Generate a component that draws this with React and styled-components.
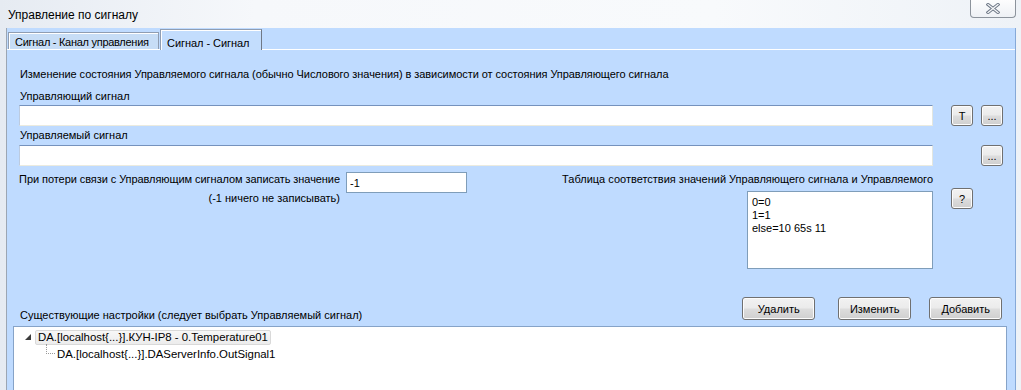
import styled, { createGlobalStyle } from 'styled-components';

const GlobalStyle = createGlobalStyle`
  html, body {
    margin: 0;
    padding: 0;
  }
  body {
    background: #f2f5f9;
    font-family: "Liberation Sans", Arial, sans-serif;
    font-size: 11px;
    color: #000;
  }
`;

const Window = styled.div`
  width: 1021px;
  height: 390px;
  overflow: hidden;
  display: flex;
  flex-direction: column;
  background: linear-gradient(90deg, #e6ebf2 0%, #f6f8fb 25%, #f8fafc 70%, #eef2f7 100%);
`;

const TitleBar = styled.div`
  height: 28px;
  flex: none;
  display: flex;
  align-items: flex-start;
`;

const Title = styled.div`
  padding: 8px 0 0 8px;
  font-size: 12px;
  line-height: 15px;
`;

const CloseButton = styled.div`
  margin-left: auto;
  margin-right: 5px;
  width: 44px;
  height: 17px;
  border: 1px solid #8c939c;
  border-top: none;
  border-radius: 0 0 4px 4px;
  background: linear-gradient(#fdfdfe, #eef1f5);
  display: flex;
  align-items: center;
  justify-content: center;
`;

const TabControl = styled.div`
  flex: 1;
  margin: 0 5px 0 6px;
  display: flex;
  flex-direction: column;
  background: #bfdbff;
  border-left: 1px solid #9ca6b3;
  border-right: 1px solid #86a9d8;
  min-height: 0;
`;

const TabStrip = styled.div`
  height: 21px;
  flex: none;
  display: flex;
  align-items: flex-end;
  padding-left: 1px;
  position: relative;
  z-index: 1;
`;

const Tab = styled.div`
  width: ${p => p.$width}px;
  height: ${p => (p.$active ? 21 : 17)}px;
  margin-bottom: ${p => (p.$active ? -1 : 0)}px;
  margin-left: ${p => (p.$active ? 1 : 0)}px;
  padding: ${p => (p.$active ? 6 : 2)}px 0 0 6px;
  display: flex;
  align-items: flex-start;
  box-sizing: border-box;
  border: 1px solid #8f9db2;
  border-bottom: none;
  border-right-color: ${p => (p.$active ? '#6f7886' : '#8f9db2')};
  background: ${p => (p.$active ? '#c3ddfd' : '#c7ddf6')};
  box-shadow: inset 1px 1px 0 #fff;
  line-height: 14px;
  letter-spacing: ${p => (p.$active ? -0.05 : -0.28)}px;
  white-space: nowrap;
  overflow: hidden;
`;

const Panel = styled.div`
  flex: 1;
  display: flex;
  flex-direction: column;
  border-top: 1px solid #ffffff;
  padding-left: 12px;
  min-height: 0;
`;

const Text = styled.div`
  line-height: 14px;
  white-space: nowrap;
  margin-top: ${p => p.$top || 0}px;
  padding-left: ${p => p.$indent || 0}px;
  letter-spacing: ${p => p.$tight || 0}px;
`;

const FormGrid = styled.div`
  display: grid;
  grid-template-columns: 914px 40px 30px;
  justify-items: end;
  margin-top: ${p => p.$top || 0}px;
`;

const TextBox = styled.input`
  box-sizing: border-box;
  width: ${p => p.$width}px;
  height: 21px;
  margin: 0 0 0 ${p => p.$left || 0}px;
  padding: 1px 3px;
  font: 11px "Liberation Sans", Arial, sans-serif;
  color: #000;
  background: #fff;
  border: 1px solid;
  border-color: ${p => (p.$plain ? '#7f9db9' : '#7592bd #e3e6e0 #ecebdf #bccbe0')};
  outline: none;
  justify-self: start;
`;

const SmallButton = styled.div`
  box-sizing: border-box;
  width: 22px;
  height: 21px;
  border: 1px solid #707070;
  border-radius: 3px;
  background: linear-gradient(#f2f2f2 0%, #ebebeb 48%, #dddddd 52%, #cfcfcf 100%);
  box-shadow: inset 0 0 0 1px #fcfcfc;
  display: flex;
  align-items: center;
  justify-content: center;
  font-size: 11px;
  line-height: 12px;
  grid-column: ${p => p.$col};
  align-self: start;
  margin-top: ${p => p.$top || 0}px;
`;

const LossRow = styled.div`
  display: flex;
  width: 914px;
  justify-self: start;
`;

const LossLabels = styled.div`
  width: 321px;
  display: flex;
  flex-direction: column;
  align-items: flex-end;
`;

const MapBlock = styled.div`
  margin-left: auto;
  display: flex;
  flex-direction: column;
  align-items: flex-end;
`;

const MapBox = styled.div`
  box-sizing: border-box;
  width: 186px;
  height: 78px;
  margin-top: 5px;
  padding: 4px 4px;
  background: #fff;
  border: 1px solid #7f9db9;
  line-height: 13px;
  white-space: pre-line;
`;

const ActionRow = styled.div`
  display: flex;
  align-items: flex-end;
  width: 984px;
  margin-top: 28px;
`;

const ActionButton = styled.div`
  box-sizing: border-box;
  width: 73px;
  height: 23px;
  margin-left: ${p => p.$gap}px;
  border: 1px solid #707070;
  border-radius: 3px;
  background: linear-gradient(#f2f2f2 0%, #ebebeb 48%, #dddddd 52%, #cfcfcf 100%);
  box-shadow: inset 0 0 0 1px #fcfcfc;
  display: flex;
  align-items: center;
  justify-content: center;
  line-height: 14px;
`;

const Tree = styled.div`
  flex: 1;
  width: 994px;
  box-sizing: border-box;
  margin: 6px 0 0 -6px;
  padding-top: 3px;
  background: #fff;
  border: 1px solid #86a3c8;
  border-bottom: none;
  font-size: 11.4px;
`;

const TreeRow = styled.div`
  display: flex;
  align-items: ${p => (p.$child ? 'flex-start' : 'center')};
  height: ${p => (p.$child ? 15 : 14)}px;
  margin-top: ${p => (p.$child ? 3 : 0)}px;
  padding-left: ${p => (p.$child ? 32 : 11)}px;
`;

const Expander = styled.svg`
  width: 6px;
  height: 6px;
  flex: none;
`;

const NodeBox = styled.div`
  margin-left: 4px;
  height: 15px;
  padding: 0 2px;
  display: flex;
  align-items: center;
  border: 1px solid #d9d9d9;
  border-radius: 2px;
  background: linear-gradient(#f7f7f7, #ececec);
  white-space: nowrap;
  box-sizing: border-box;
`;

const Connector = styled.span`
  width: 8px;
  height: 9px;
  margin-top: -3px;
  border-left: 1px dotted #9a9a9a;
  border-bottom: 1px dotted #9a9a9a;
  flex: none;
`;

const NodeText = styled.span`
  margin-left: 2px;
  line-height: 14px;
  white-space: nowrap;
`;

function CloseGlyph() {
  return (
    <svg width="14" height="11" viewBox="0 0 14 11">
      <path d="M2 1.5 L12 9.5 M12 1.5 L2 9.5" stroke="#6c7685" strokeWidth="3.2" strokeLinecap="square" fill="none" />
      <path d="M2 1.5 L12 9.5 M12 1.5 L2 9.5" stroke="#f6f7f9" strokeWidth="1.3" strokeLinecap="square" fill="none" />
    </svg>
  );
}

export default function App() {
  return (
    <>
      <GlobalStyle />
      <Window>
        <TitleBar>
          <Title>Управление по сигналу</Title>
          <CloseButton>
            <CloseGlyph />
          </CloseButton>
        </TitleBar>

        <TabControl>
          <TabStrip>
            <Tab $width={151}>Сигнал - Канал управления</Tab>
            <Tab $width={102} $active>Сигнал - Сигнал</Tab>
          </TabStrip>

          <Panel>
            <Text $top={17} $indent={1} $tight={-0.06}>
              Изменение состояния Управляемого сигнала (обычно Числового значения) в зависимости от состояния Управляющего сигнала
            </Text>

            <Text $top={8} $indent={1}>Управляющий сигнал</Text>
            <FormGrid $top={2}>
              <TextBox $width={914} readOnly />
              <SmallButton $col={2}>T</SmallButton>
              <SmallButton $col={3}>...</SmallButton>
            </FormGrid>

            <Text $top={2} $indent={1}>Управляемый сигнал</Text>
            <FormGrid $top={3}>
              <TextBox $width={914} readOnly />
              <SmallButton $col={3}>...</SmallButton>
            </FormGrid>

            <FormGrid $top={6}>
              <LossRow>
                <LossLabels>
                  <Text $tight={-0.07}>При потери связи с Управляющим сигналом записать значение</Text>
                  <Text $top={5}>(-1 ничего не записывать)</Text>
                </LossLabels>
                <TextBox $width={121} $left={6} $plain defaultValue="-1" />
                <MapBlock>
                  <Text>Таблица соответствия значений Управляющего сигнала и Управляемого</Text>
                  <MapBox>{'0=0\n1=1\nelse=10 65s 11'}</MapBox>
                </MapBlock>
              </LossRow>
              <SmallButton $col={2} $top={16}>?</SmallButton>
            </FormGrid>

            <ActionRow>
              <Text $indent={1} style={{ marginBottom: -2 }}>
                Существующие настройки (следует выбрать Управляемый сигнал)
              </Text>
              <ActionButton $gap={380}>Удалить</ActionButton>
              <ActionButton $gap={23}>Изменить</ActionButton>
              <ActionButton $gap={18}>Добавить</ActionButton>
            </ActionRow>

            <Tree>
              <TreeRow>
                <Expander viewBox="0 0 6 6">
                  <polygon points="6,0 6,6 0,6" fill="#3c3c3c" />
                </Expander>
                <NodeBox>{'DA.[localhost{...}].КУН-IP8 - 0.Temperature01'}</NodeBox>
              </TreeRow>
              <TreeRow $child>
                <Connector />
                <NodeText>{'DA.[localhost{...}].DAServerInfo.OutSignal1'}</NodeText>
              </TreeRow>
            </Tree>
          </Panel>
        </TabControl>
      </Window>
    </>
  );
}
